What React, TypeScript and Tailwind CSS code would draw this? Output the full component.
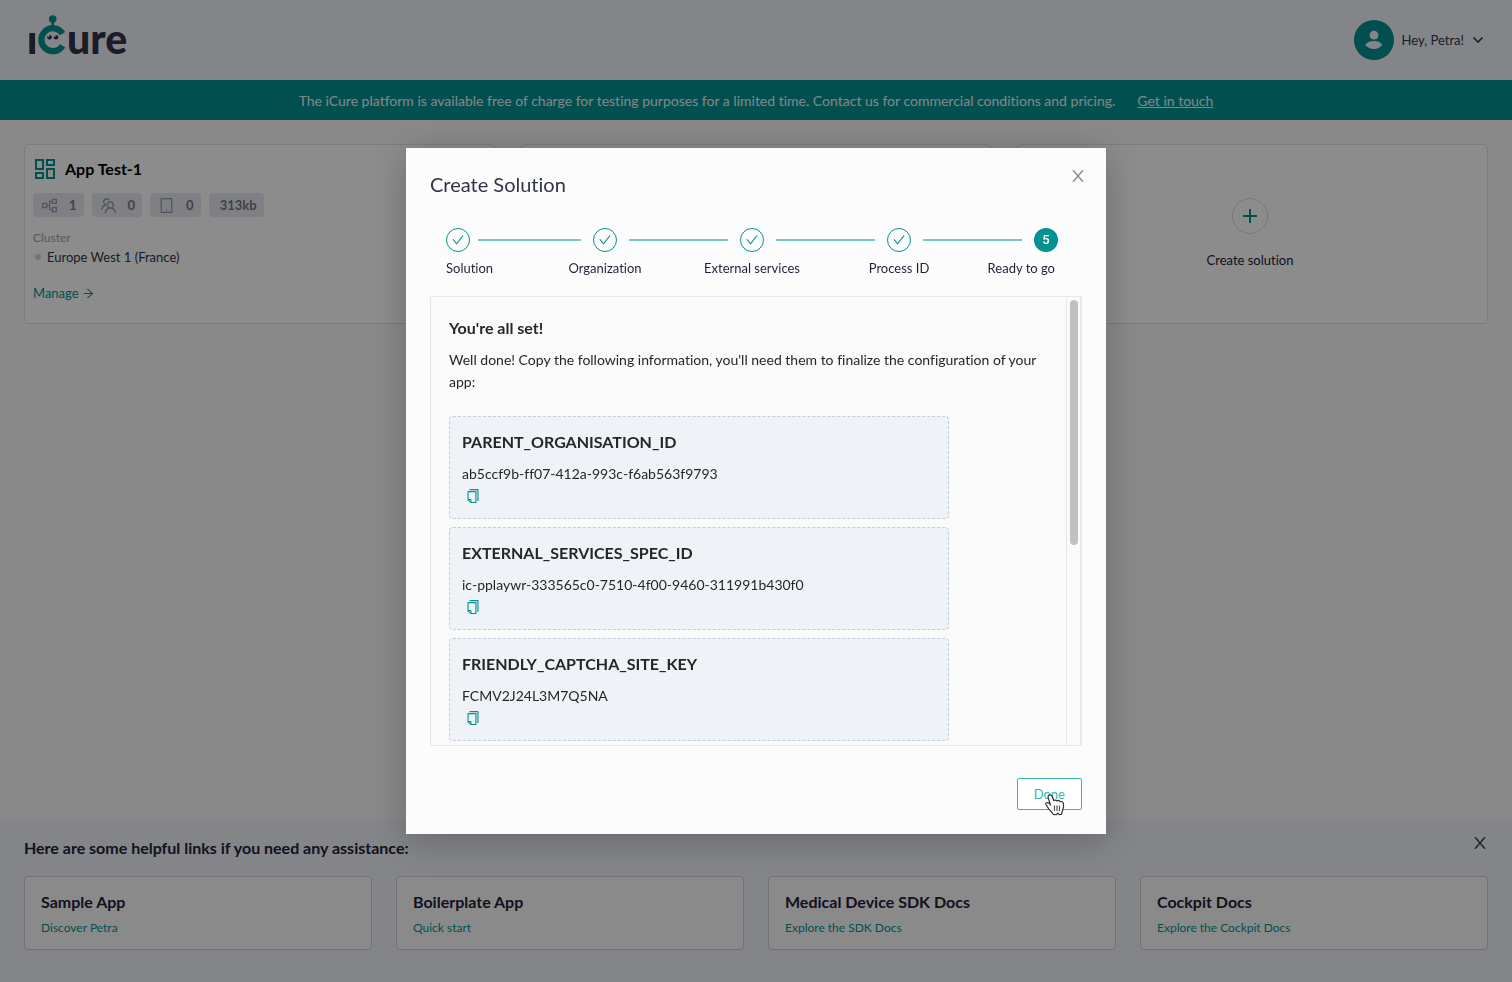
import type { ReactNode } from "react";
import {
  AiOutlineArrowRight,
  AiOutlineCheck,
  AiOutlineCopy,
  AiOutlinePartition,
  AiOutlineTablet,
  AiOutlineTeam,
} from "react-icons/ai";

const steps = ["Solution", "Organization", "External services", "Process ID", "Ready to go"];

const credentials = [
  { name: "PARENT_ORGANISATION_ID", value: "ab5ccf9b-ff07-412a-993c-f6ab563f9793" },
  { name: "EXTERNAL_SERVICES_SPEC_ID", value: "ic-pplaywr-333565c0-7510-4f00-9460-311991b430f0" },
  { name: "FRIENDLY_CAPTCHA_SITE_KEY", value: "FCMV2J24L3M7Q5NA" },
];

const helpLinks = [
  { title: "Sample App", link: "Discover Petra" },
  { title: "Boilerplate App", link: "Quick start" },
  { title: "Medical Device SDK Docs", link: "Explore the SDK Docs" },
  { title: "Cockpit Docs", link: "Explore the Cockpit Docs" },
];

function CloseIcon() {
  return (
    <svg viewBox="64 64 896 896" className="size-4" fill="currentColor" aria-hidden="true">
      <path d="M563.8 512l262.5-312.9c4.4-5.2.7-13.1-6.1-13.1h-79.8c-4.7 0-9.2 2.1-12.3 5.7L511.6 449.8 295.1 191.7c-3-3.6-7.5-5.7-12.3-5.7H203c-6.8 0-10.5 7.9-6.1 13.1L459.4 512 196.9 824.9A7.95 7.95 0 0 0 203 838h79.8c4.7 0 9.2-2.1 12.3-5.7l216.5-258.1 216.5 258.1c3 3.6 7.5 5.7 12.3 5.7h79.8c6.8 0 10.5-7.9 6.1-13.1L563.8 512z" />
    </svg>
  );
}

function Logo() {
  return (
    <svg viewBox="0 -8 108 60" className="h-[60px] w-[108px]" role="img" aria-label="iCure">
      <rect x="1.300" y="18" width="5.800" height="21" fill="#31344b" />
      <text x="39" y="39" fill="#31344b" fontFamily="Lato, sans-serif" fontWeight="900" fontSize="41">
        ure
      </text>
      <path d="M34.600 18.600A11.500 11.500 0 1 0 34.600 30.800" fill="none" stroke="#029291" strokeWidth="6.200" />
      <path d="M24.700 4v10" stroke="#029291" strokeWidth="2.600" />
      <circle cx="24.700" cy="4" r="3.800" fill="#029291" />
      <circle cx="21.500" cy="22.300" r="2.300" fill="#31344b" />
      <circle cx="28" cy="22.300" r="2.300" fill="#31344b" />
      <circle cx="20.400" cy="21" r="0.900" fill="#eff2f9" />
      <circle cx="26.900" cy="21" r="0.900" fill="#eff2f9" />
    </svg>
  );
}

function Chip({ icon, children }: { icon?: ReactNode; children: ReactNode }) {
  return (
    <li className="flex h-6 items-center gap-2.5 rounded bg-[#e6e9f1] px-[7px] text-[13px] font-bold text-[#767980]">
      {icon && <span className="flex w-[19px] justify-center text-[#9499a3]">{icon}</span>}
      <span className={icon ? "pt-0.5" : "pt-0.5 pl-1"}>{children}</span>
    </li>
  );
}

function Header() {
  return (
    <header className="flex h-20 items-center justify-between bg-[#eff2f9] px-7">
      <a href="#home" className="-mt-1.5">
        <Logo />
      </a>
      <button type="button" className="flex items-center gap-2 text-[13px] text-[#31344b]">
        <svg viewBox="0 0 40 40" className="size-10" aria-hidden="true">
          <circle cx="20" cy="20" r="20" fill="#029291" />
          <circle cx="20" cy="15.2" r="4.4" fill="#eff2f9" />
          <path d="M11.3 24.8C13.6 21.9 16.6 21 20 21s6.2.9 8.3 3.8C26.6 27.5 23.6 29 20 29s-7-1.500-8.700-4.200z" fill="#eff2f9" />
        </svg>
        <span className="pt-0.5">Hey, Petra!</span>
        <svg viewBox="0 0 12 12" className="size-3" aria-hidden="true">
          <path d="M1.500 3.500 6 8l4.500-4.500" fill="none" stroke="currentColor" strokeWidth="1.600" />
        </svg>
      </button>
    </header>
  );
}

function SolutionCard() {
  return (
    <article className="flex flex-col items-start rounded border border-[#e1e2e6] bg-white px-2 pt-3">
      <h2 className="flex items-center gap-2.5 pl-0.5 text-base leading-6 font-bold text-black">
        <svg viewBox="0 0 20 20" className="size-5" fill="none" stroke="#029291" strokeWidth="2" aria-hidden="true">
          <rect x="1" y="1" width="7" height="9" />
          <rect x="12" y="1" width="7" height="5" />
          <rect x="1" y="14" width="7" height="5" />
          <rect x="12" y="10" width="7" height="9" />
        </svg>
        App Test-1
      </h2>
      <ul className="mt-3 flex gap-2">
        <Chip icon={<AiOutlinePartition className="size-[19px]" />}>1</Chip>
        <Chip icon={<AiOutlineTeam className="size-[19px]" />}>0</Chip>
        <Chip icon={<AiOutlineTablet className="size-[17px]" />}>0</Chip>
        <Chip>313kb</Chip>
      </ul>
      <p className="mt-3 text-xs leading-[18px] text-[#9a9fa9]">Cluster</p>
      <p className="flex items-center gap-1.5 text-[13px] leading-5 text-[#31344b]">
        <span className="ml-0.5 size-1.5 rounded-full bg-[#d3d6dc]" />
        Europe West 1 (France)
      </p>
      <a href="#manage" className="mt-4 flex items-center gap-[3px] text-[13px] leading-5 text-[#029291]">
        Manage <AiOutlineArrowRight className="size-[13px]" />
      </a>
    </article>
  );
}

function HelpPanel() {
  return (
    <footer className="bg-[#eff2f9] px-6 pt-4 pb-8">
      <div className="flex items-start justify-between">
        <h2 className="text-base leading-[26px] font-bold text-[#1f2239]">
          Here are some helpful links if you need any assistance:
        </h2>
        <button type="button" aria-label="Close" className="text-[#31344b]">
          <CloseIcon />
        </button>
      </div>
      <div className="mt-[15px] grid grid-cols-4 gap-6">
        {helpLinks.map((item) => (
          <article key={item.title} className="rounded border border-[#cfd0d5] bg-[#fbfcfd] px-4 py-3">
            <h3 className="text-base leading-[26px] font-bold text-[#1f2239]">{item.title}</h3>
            <a href="#docs" className="mt-1 block text-xs leading-[18px] text-[#029291]">
              {item.link}
            </a>
          </article>
        ))}
      </div>
    </footer>
  );
}

function Stepper() {
  return (
    <ol className="mt-8 mr-6 ml-4 flex text-[13px] text-[#1f2239]">
      {steps.map((label, index) => {
        const first = index === 0;
        const last = index === steps.length - 1;
        return (
          <li key={label} className={last ? "w-6" : "flex-1"}>
            <div className="flex items-center">
              {last ? (
                <span className="flex size-6 shrink-0 items-center justify-center rounded-full bg-[#029291] font-[Roboto] text-[13px] font-medium text-white">
                  {index + 1}
                </span>
              ) : (
                <span className="flex size-6 shrink-0 items-center justify-center rounded-full border border-[#029291] text-[#029291]">
                  <AiOutlineCheck className="size-3.5" />
                </span>
              )}
              {!last && <span className={`h-0.5 flex-1 bg-[#75c9c6] ${first ? "mr-3 ml-2" : "mx-3"}`} />}
            </div>
            <div
              className={`mt-[5px] flex w-6 leading-[22px] whitespace-nowrap ${
                first ? "justify-start" : last ? "justify-end pr-[3px]" : "justify-center"
              }`}
            >
              {label}
            </div>
          </li>
        );
      })}
    </ol>
  );
}

function PointerCursor() {
  return (
    <svg viewBox="0 0 20 22" className="absolute top-[15px] left-[27px] h-[22px] w-5" aria-hidden="true">
      <path
        d="M3.500 1.500C5 .3 6.800 1.200 7.200 2.600L8.800 6.500c1.200-.8 2.400-.5 3 .4 1.200-.6 2.700-.2 3.200.7 1.800-.4 3.200.4 3.400 2 .4 2.900 0 4.900-.8 6.600-.6 1.400-.6 2.300-1 4.100l-2.400.3-1.400-1.400-1.400 1.400-3.200-.2C7.500 18 5.500 17 4 15.400L.9 10.500C.3 8.800 2.200 8 3.700 9l1.600 1.400L3.200 3.800c-.2-1-.2-1.800.3-2.300z"
        fill="#fff"
        stroke="#333"
        strokeWidth="1.200"
      />
      <path d="M9.500 11.500v5.500M12 11.500v5.500M14.500 11.500v5.500" stroke="#555" strokeWidth="1.200" />
    </svg>
  );
}

function CreateSolutionDialog() {
  return (
    <div className="fixed inset-0 flex items-center justify-center bg-black/45">
      <section
        role="dialog"
        aria-modal="true"
        aria-labelledby="dialog-title"
        className="w-[700px] max-w-full bg-[#fcfcfc] p-6 shadow-[0_6px_36px_rgba(0,0,0,0.24)]"
      >
        <div className="flex items-start justify-between">
          <h1 id="dialog-title" className="text-xl leading-6 text-[#31344b]">
            Create Solution
          </h1>
          <button type="button" aria-label="Close" className="-mt-1 -mr-1 text-[#888]">
            <CloseIcon />
          </button>
        </div>
        <Stepper />
        <div className="mt-[17px] flex h-[450px] rounded-xs border border-[#e8e8e8] bg-[#fafafa]">
          <div className="flex-1 overflow-y-auto p-[18px] text-sm leading-[22px] text-[#262626] [scrollbar-width:none]">
            <h2 className="mb-2 text-base leading-[26px] font-bold">You're all set!</h2>
            <p>
              Well done! Copy the following information, you'll need them to finalize the configuration of your app:
            </p>
            <ul className="mt-[23px] flex max-w-[500px] flex-col gap-2">
              {credentials.map((item) => (
                <li key={item.name} className="rounded border border-dashed border-[#c5cdd8] bg-[#eff3f8] px-3 pt-3 pb-[11px]">
                  <h3 className="mb-2 text-base leading-[26px] font-bold">{item.name}</h3>
                  <p>{item.value}</p>
                  <button type="button" aria-label={`Copy ${item.name}`} className="ml-[3px] flex h-[22px] items-center text-[#029291]">
                    <AiOutlineCopy className="size-4" />
                  </button>
                </li>
              ))}
            </ul>
          </div>
          <div className="w-[15px] border-x border-[#e8e8e8] px-[3px] pt-[3px]">
            <div className="h-[245px] w-2 rounded-full bg-[#c1c1c1]" />
          </div>
        </div>
        <div className="mt-8 flex justify-end">
          <button type="button" className="relative h-8 rounded-xs border border-[#34b5b0] bg-white px-4 pt-0.5 text-[13px] text-[#34b5b0]">
            Done
            <PointerCursor />
          </button>
        </div>
      </section>
    </div>
  );
}

export default function App() {
  return (
    <div className="flex min-h-screen flex-col bg-[#fafafa] font-[Lato,sans-serif] [font-variant-ligatures:none]">
      <Header />
      <div className="flex h-10 items-center justify-center gap-[22px] bg-[#029291] pt-0.5 text-sm text-[#eff2f9]">
        <p>
          The iCure platform is available free of charge for testing purposes for a limited time. Contact us for
          commercial conditions and pricing.
        </p>
        <a href="#contact" className="underline">
          Get in touch
        </a>
      </div>
      <main className="flex-1 p-6">
        <div className="grid auto-rows-[180px] grid-cols-3 gap-6">
          <SolutionCard />
          <article className="rounded border border-[#e1e2e6] bg-white" />
          <button
            type="button"
            className="flex flex-col items-center justify-center gap-[17px] rounded border border-[#e1e2e6] bg-white pr-1 text-[13px] text-[#1f2239]"
          >
            <span className="flex size-9 items-center justify-center rounded-full border border-[#d9dbe0]">
              <svg viewBox="0 0 14 14" className="size-3.5" stroke="#029291" strokeWidth="2" aria-hidden="true">
                <path d="M7 0v14M0 7h14" />
              </svg>
            </span>
            Create solution
          </button>
        </div>
      </main>
      <HelpPanel />
      <CreateSolutionDialog />
    </div>
  );
}
